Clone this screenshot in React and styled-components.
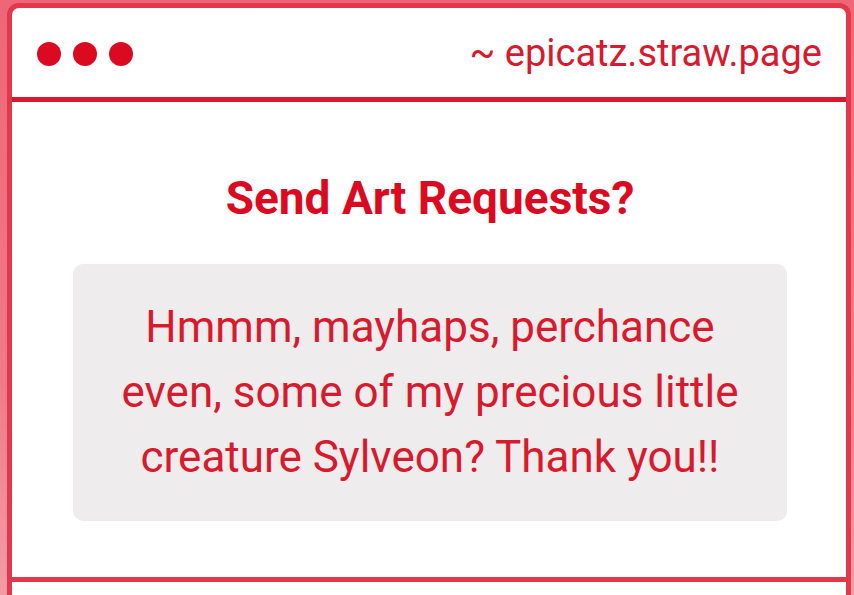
import React from "react";
import styled, { createGlobalStyle } from "styled-components";

const Global = createGlobalStyle`
  html, body { margin: 0; padding: 0; }
  body {
    background: linear-gradient(180deg, #ee6677 0%, #f07a88 60%, #f4a3ad 100%);
    min-height: 595px;
    overflow: hidden;
    font-family: Roboto, "Liberation Sans", sans-serif;
  }
`;

const Page = styled.div`
  padding: 3px 3px 0 7px;
`;

const Card = styled.div`
  background: #fff;
  border: 5px solid #e2384a;
  border-bottom: none;
  border-radius: 12px 12px 0 0;
  height: 640px;
  box-sizing: border-box;
`;

const Header = styled.div`
  display: flex;
  align-items: center;
  justify-content: space-between;
  height: 89px;
  padding: 0 24px 0 25px;
  border-bottom: 5px solid #d9192d;
`;

const Dots = styled.div`
  display: flex;
  gap: 12px;
  padding-top: 2px;
`;

const Dot = styled.span`
  width: 24px;
  height: 24px;
  border-radius: 50%;
  background: #dc0a20;
`;

const Url = styled.div`
  color: #d81a2e;
  font-size: 38px;
  line-height: 44px;
`;

const Body = styled.div`
  display: flex;
  flex-direction: column;
  align-items: center;
  height: 480px;
  border-bottom: 5px solid #e2384a;
  box-sizing: border-box;
  padding: 0 59px 0 61px;
`;

const Title = styled.h1`
  margin: 68px 0 0;
  font-size: 46px;
  font-weight: 700;
  color: #dc0a20;
  line-height: 56px;
`;

const Box = styled.div`
  margin-top: 38px;
  align-self: stretch;
  background: #eeeced;
  border-radius: 10px;
  padding: 31px 10px;
  text-align: center;
  color: #d81a2e;
  font-size: 44px;
  line-height: 65px;
`;

export default function App() {
  return (
    <>
      <Global />
      <Page>
        <Card>
          <Header>
            <Dots>
              <Dot />
              <Dot />
              <Dot />
            </Dots>
            <Url>~ epicatz.straw.page</Url>
          </Header>
          <Body>
            <Title>Send Art Requests?</Title>
            <Box>
              Hmmm, mayhaps, perchance
              <br />
              even, some of my precious little
              <br />
              creature Sylveon? Thank you!!
            </Box>
          </Body>
        </Card>
      </Page>
    </>
  );
}
